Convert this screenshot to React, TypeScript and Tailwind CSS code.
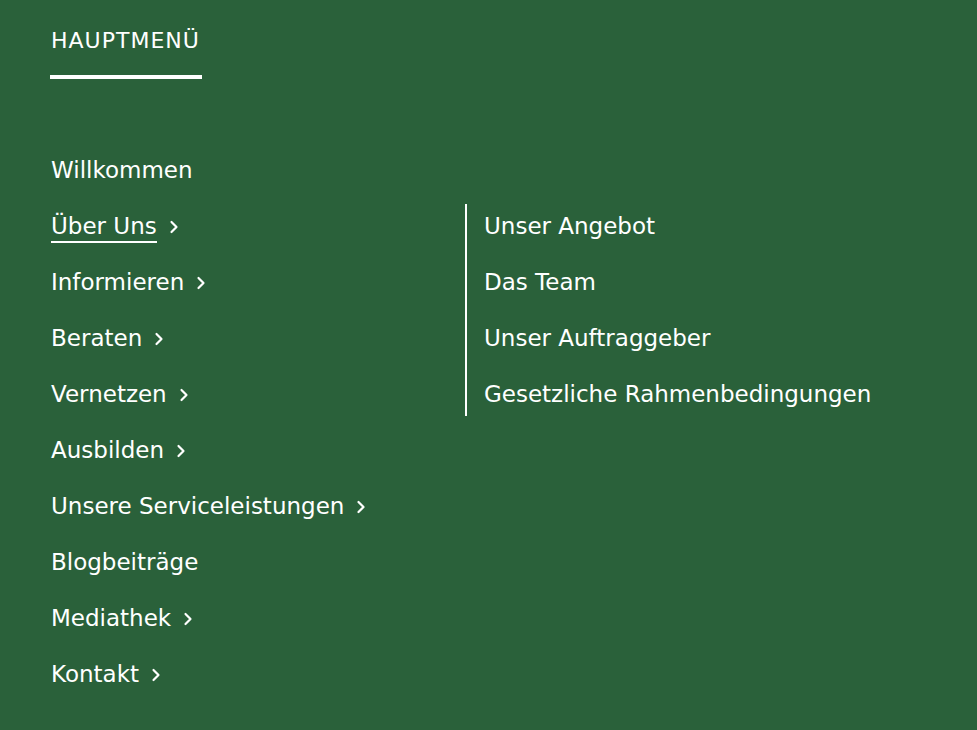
import React from "react";

const Chevron = () => (
  <svg width="10" height="14" viewBox="0 0 10 14" className="ml-[12px] shrink-0 mt-[1px]" fill="none">
    <path d="M2.5 2 L7.5 7 L2.5 12" stroke="white" strokeWidth="2.2" strokeLinecap="round" strokeLinejoin="round" />
  </svg>
);

const left: { label: string; chevron: boolean; active?: boolean }[] = [
  { label: "Willkommen", chevron: false },
  { label: "Über Uns", chevron: true, active: true },
  { label: "Informieren", chevron: true },
  { label: "Beraten", chevron: true },
  { label: "Vernetzen", chevron: true },
  { label: "Ausbilden", chevron: true },
  { label: "Unsere Serviceleistungen", chevron: true },
  { label: "Blogbeiträge", chevron: false },
  { label: "Mediathek", chevron: true },
  { label: "Kontakt", chevron: true },
];

const right = ["Unser Angebot", "Das Team", "Unser Auftraggeber", "Gesetzliche Rahmenbedingungen"];

export default function App() {
  return (
    <div
      className="w-[977px] h-[730px] bg-[#2a613a] text-white overflow-hidden"
      style={{ fontFamily: '"DejaVu Sans", sans-serif' }}
    >
      <div className="pl-[50px] pt-[28px]">
        <div className="inline-flex flex-col">
          <div className="text-[22px] leading-[26px] pl-[1px] tracking-[1px]">HAUPTMENÜ</div>
          <div className="mt-[21px] w-[152px] h-[4px] bg-white" />
        </div>
      </div>
      <div className="flex pl-[51px] mt-[69px]">
        <div className="flex flex-col gap-[12px] w-[414px]">
          {left.map((it) => (
            <div key={it.label} className="h-[44px] flex items-center text-[23px]">
              <span className={it.active ? "relative" : ""}>
                {it.label}
                {it.active && <span className="absolute left-0 right-0 bottom-0 h-[2px] bg-white" />}
              </span>
              {it.chevron && <Chevron />}
            </div>
          ))}
        </div>
        <div className="mt-[56px] self-start border-l-2 border-white pl-[17px] flex flex-col gap-[12px]">
          {right.map((r) => (
            <div key={r} className="h-[44px] flex items-center text-[23px]">
              {r}
            </div>
          ))}
        </div>
      </div>
    </div>
  );
}
